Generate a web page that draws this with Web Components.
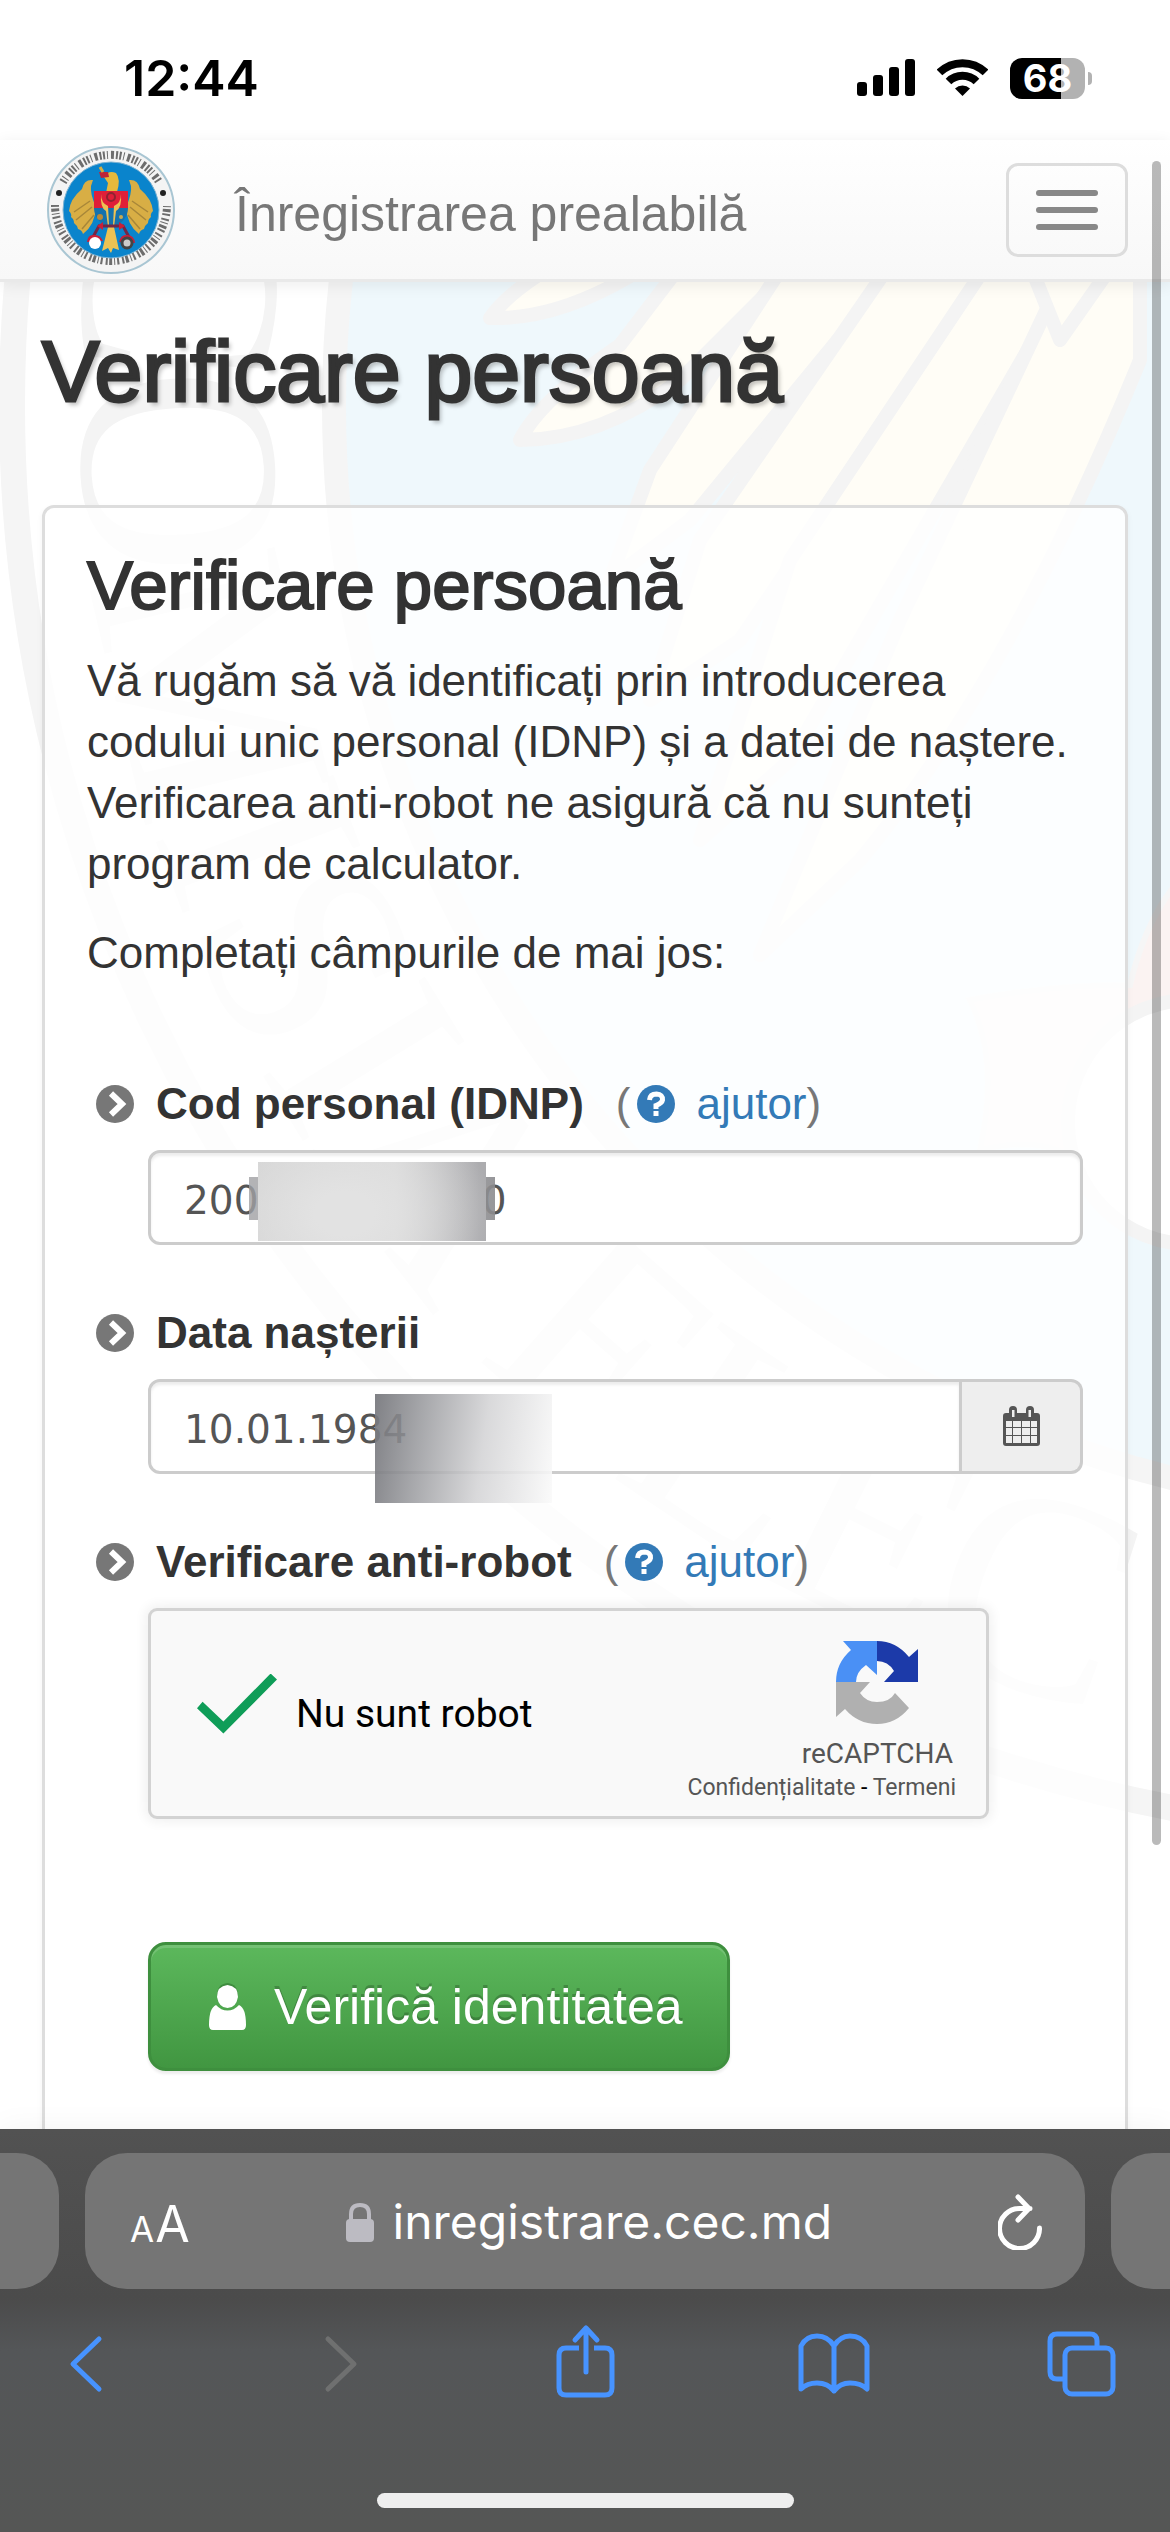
<!DOCTYPE html>
<html lang="ro">
<head>
<meta charset="utf-8">
<meta name="viewport" content="width=device-width, initial-scale=1">
<title>Înregistrarea prealabilă</title>
<style>
  html, body { margin: 0; height: 100%; }
  body { background: #fff; color: #333; font-family: "Liberation Sans", Arial, sans-serif; font-size: 44px; line-height: 61px; }
</style>
</head>
<body>
<phone-shell>
  <status-bar slot="top" time="12:44" battery="68"></status-bar>
  <site-navbar slot="top">Înregistrarea prealabilă</site-navbar>
  <page-title>Verificare persoană</page-title>
  <form-panel heading="Verificare persoană">
    <p slot="intro">Vă rugăm să vă identificați prin introducerea codului unic personal (IDNP) și a datei de naștere. Verificarea anti-robot ne asigură că nu sunteți program de calculator.</p>
    <p slot="intro">Completați câmpurile de mai jos:</p>
    <text-field label="Cod personal (IDNP)" help="ajutor" value="200&#x2007;&#x2007;&#x2007;&#x2007;&#x2007;&#x2007;&#x2007;&#x2007;&#x2007;0" mask="code"></text-field>
    <text-field label="Data nașterii" value="10.01.1984" mask="date" calendar></text-field>
    <captcha-field label="Verificare anti-robot" help="ajutor"></captcha-field>
    <submit-button>Verifică identitatea</submit-button>
  </form-panel>
  <browser-bar slot="bottom" host="inregistrare.cec.md"></browser-bar>
</phone-shell>

<script>
const define = (name, render) => customElements.define(name, class extends HTMLElement {
  connectedCallback() {
    if (this.shadowRoot) return;
    this.attachShadow({ mode: 'open' }).innerHTML = render(this);
  }
});

define('phone-shell', () => `
  <style>
    :host { display: flex; flex-direction: column; height: 100vh; position: relative; overflow: hidden; }
    header, footer { flex: none; position: relative; z-index: 1; }
    main { flex: 1; min-height: 0; overflow: hidden; position: relative; padding: 42px 42px 0; }
    .content { position: relative; }
    .thumb { position: absolute; z-index: 2; right: 9px; top: 161px; height: 66.5%; width: 9px; border-radius: 5px; background: rgba(0,0,0,.27); }
  </style>
  <header><slot name="top"></slot></header>
  <main>
    <seal-watermark></seal-watermark>
    <div class="content"><slot></slot></div>
  </main>
  <footer><slot name="bottom"></slot></footer>
  <div class="thumb"></div>`);

define('seal-watermark', () => `
  <style>
    :host { position: absolute; inset: 0; overflow: hidden; }
    svg { display: block; }
    text { font-family: "Liberation Serif", serif; font-weight: 400; font-size: 290px; fill: #f4f4f4; }
  </style>
  <svg width="1170" height="1850" viewBox="0 282 1170 1850" aria-hidden="true">
    <circle cx="1440" cy="405" r="1428" fill="none" stroke="#f5f5f5" stroke-width="26"/>
    <circle cx="1440" cy="405" r="1106" fill="#eff8fc" stroke="#f5f5f5" stroke-width="24"/>
    <path id="ring" d="M98 180A1361 1361 0 0 0 1440 1756" fill="none"/>
    <text><textPath href="#ring">COMISIA ELEC</textPath></text>
    <g fill="#fffdf6" stroke="#f4f4f4" stroke-width="14" stroke-linejoin="round">
      <path d="M640 240L560 262Q510 290 490 318Q560 320 640 270Z"/>
      <path d="M700 240L620 345Q540 400 520 440Q600 440 680 380L820 240Z"/>
      <path d="M800 240L650 470L610 580L690 520L920 240Z"/>
      <path d="M900 250L700 540L650 700L740 640L1010 240Z"/>
      <path d="M990 260L790 560L700 840L790 760L1080 260Z"/>
      <path d="M1070 260L900 620L760 955L860 860Q1010 680 1140 360V260Z"/>
      <path d="M1020 240L1060 340L1130 240Z"/>
    </g>
    <path d="M1200 860Q1150 900 1130 985Q1050 985 970 1000Q1000 1060 980 1150Q1060 1130 1100 1180L1200 1100Z" fill="#fbf3f2" stroke="#f6f6f6" stroke-width="6"/>
    <circle cx="1190" cy="1122" r="122" fill="#fff" stroke="#f4f4f4" stroke-width="14"/>
  </svg>`);

define('status-bar', el => `
  <style>
    :host { display: flex; justify-content: space-between; align-items: flex-end; box-sizing: border-box; height: 140px; padding: 0 78px 36px 124px; background: #fff; color: #000; font-family: Inter, sans-serif; font-weight: 600; }
    time { font-size: 50px; line-height: 52px; }
    .icons { display: flex; align-items: center; gap: 22px; height: 52px; }
    svg { display: block; }
    .battery { display: flex; align-items: center; gap: 3px; }
    .cell { width: 75px; height: 41px; border-radius: 12px; background: linear-gradient(90deg, #000 68%, #b2b2b2 68%); color: #fff; font-size: 38px; font-weight: 700; line-height: 41px; text-align: center; }
    .nub { width: 4px; height: 13px; border-radius: 0 6px 6px 0; background: #b2b2b2; }
  </style>
  <time>${el.getAttribute('time')}</time>
  <div class="icons">
    <svg width="58" height="38" viewBox="0 0 58 38"><rect y="23" width="10" height="14" rx="3"/><rect x="16" y="16" width="10" height="21" rx="3"/><rect x="32" y="8" width="10" height="29" rx="3"/><rect x="48" width="10" height="37" rx="3"/></svg>
    <svg width="51" height="38" viewBox="0 0 51 38"><g fill="none" stroke="#000" stroke-width="8"><path d="M2.500 13.500A33 33 0 0 1 48.500 13.500"/><path d="M11.500 22.500A20 20 0 0 1 39.500 22.500"/></g><path d="M25.500 37L18 29.500A11 11 0 0 1 33 29.500Z"/></svg>
    <div class="battery"><span class="cell">${el.getAttribute('battery')}</span><span class="nub"></span></div>
  </div>`);

define('cec-seal', () => `
  <style>
    :host { display: block; }
    svg { display: block; }
  </style>
  <svg width="130" height="130" viewBox="0 0 130 130" aria-hidden="true">
    <circle cx="65" cy="65" r="63" fill="#f4f4f4" stroke="#a9c6d3" stroke-width="2"/>
    <g fill="none" stroke="#6d6d6d" stroke-width="8">
      <path d="M17 37A56 56 0 0 1 113 37" stroke-dasharray="2 2 1 3 3 2 2 1.500"/>
      <path d="M9 60A56 56 0 0 0 121 60" stroke-dasharray="2 1.500 3 2 1 2 2 3"/>
    </g>
    <circle cx="65" cy="65" r="48" fill="#0a84cc" stroke="#7fb4d3" stroke-width="1"/>
    <circle cx="13" cy="48" r="3" fill="#222"/><circle cx="117" cy="48" r="3" fill="#222"/>
    <path d="M47 35Q38 34 36 44Q24 54 23 66Q26 69 25 72Q28 74 28 78Q31 80 32 84Q36 85 37 89Q49 80 50 62Q44 49 45 41ZM83 35Q92 34 94 44Q106 54 107 66Q104 69 105 72Q102 74 102 78Q99 80 98 84Q94 85 93 89Q81 80 80 62Q86 49 85 41Z" fill="#d8ae45"/>
    <path d="M28 67L44 56M30 75L46 62M36 84L48 70M102 67L86 56M100 75L84 62M94 84L82 70" stroke="#a88739" stroke-width="1.500"/>
    <path d="M60 48L62 38L58 32Q62 25 70 28Q75 34 71 47Z" fill="#e6b93c"/>
    <path d="M53 27L62 27L63 32L55 33Z" fill="#bf2438"/>
    <path d="M54 22L57 27" stroke="#d5ad42" stroke-width="3"/>
    <path d="M48 46H82V63H48Z" fill="#e01f38"/>
    <path d="M48 63H82Q82 76 65 84Q48 76 48 63Z" fill="#1572ad"/>
    <path d="M55 49Q55 58 62 61L63 80H67L68 61Q75 58 75 49Q76 63 70 66L68 82L73 105L67 103L65 108L62 103L56 106L62 82L60 66Q54 63 55 49Z" fill="#edc253"/>
    <circle cx="65" cy="52" r="4" fill="none" stroke="#8f2431" stroke-width="2"/>
    <circle cx="54" cy="72" r="3" fill="#b88a3a"/><circle cx="75" cy="72" r="2" fill="#c8aa50"/>
    <path d="M52 81H78M53 81L47 92M77 81L83 92" stroke="#732746" stroke-width="3" fill="none"/>
    <path d="M51 81L57 77V85ZM79 81L73 77V85Z" fill="#c91f39"/>
    <path d="M41 97Q42 89 48 90Q54 89 57 96ZM73 97Q75 89 81 90Q88 90 89 98Z" fill="#c91f39"/>
    <circle cx="49" cy="98" r="6" fill="#fff"/><circle cx="81" cy="98" r="5" fill="#ccc" stroke="#444" stroke-width="3"/>
  </svg>`);

define('site-navbar', () => `
  <style>
    :host { display: flex; align-items: center; box-sizing: border-box; height: 142px; padding: 0 42px 0 46px; border-bottom: 3px solid #e9e9e9; background: linear-gradient(#fff, #f8f8f8); box-shadow: 0 3px 15px rgba(0,0,0,.075); color: #777; font-size: 50px; line-height: 60px; }
    a { display: block; margin-right: 59px; }
    span { flex: 1; padding-top: 8px; white-space: nowrap; }
    button { display: flex; flex-direction: column; align-items: center; justify-content: center; gap: 11px; box-sizing: border-box; width: 122px; height: 94px; padding: 0; border: 3px solid #ddd; border-radius: 12px; background: transparent; }
    i { display: block; width: 62px; height: 6px; border-radius: 3px; background: #888; }
  </style>
  <a href="#" aria-label="CEC"><cec-seal></cec-seal></a>
  <span><slot></slot></span>
  <button type="button" aria-label="Meniu"><i></i><i></i><i></i></button>`);

define('page-title', () => `
  <style>
    :host { display: block; margin-bottom: 87px; }
    h1 { margin: 0; font-size: 86px; line-height: 94px; font-weight: 400; -webkit-text-stroke: 3px #333; text-shadow: 3px 4px 4px rgba(0,0,0,.25); }
  </style>
  <h1><slot></slot></h1>`);

define('form-panel', el => `
  <style>
    :host { display: block; padding: 40px 42px 120px; border: 3px solid #ddd; border-radius: 12px; background: rgba(255,255,255,.8); box-shadow: 0 3px 6px rgba(0,0,0,.05); }
    h2 { margin: 0 0 27px; font-size: 69px; line-height: 75px; font-weight: 400; -webkit-text-stroke: 2px #333; }
    ::slotted(p) { margin: 0 0 28px; }
    form { display: flex; flex-direction: column; gap: 57px; padding-top: 62px; }
  </style>
  <h2>${el.getAttribute('heading')}</h2>
  <slot name="intro"></slot>
  <form><slot></slot></form>`);

const labelStyle = `
  .label { display: flex; align-items: center; margin: 0 0 16px 9px; line-height: 61px; }
  .label svg { display: block; flex: none; }
  label.name { margin-left: 22px; font-weight: 700; white-space: nowrap; }
  .help { display: flex; align-items: center; margin-left: 32px; color: #777; }
  .help a { display: flex; align-items: center; gap: 21px; margin-left: 7px; color: #337ab7; text-decoration: none; }`;

const labelRow = (text, help) => `
  <div class="label">
    <svg width="38" height="38" viewBox="0 0 38 38" aria-hidden="true"><circle cx="19" cy="19" r="19" fill="#777"/><path d="M15 8.500L26 19L15 29.500" fill="none" stroke="#fff" stroke-width="6" stroke-linecap="butt"/></svg>
    <label class="name" for="control">${text}</label>
    ${help ? `<span class="help">(<a href="#"><svg width="38" height="38" viewBox="0 0 38 38" aria-hidden="true"><circle cx="19" cy="19" r="19" fill="#337ab7"/><path d="M12.500 15Q13 9 19.500 9Q26 9.500 25.500 15Q25 18 19 20.500V24" fill="none" stroke="#fff" stroke-width="5"/><rect x="16.500" y="26" width="5" height="5" fill="#fff"/></svg>${help}</a>)</span>` : ''}
  </div>`;

define('text-field', el => `
  <style>
    :host { display: block; }
    ${labelStyle}
    .group { display: flex; position: relative; margin-left: 61px; height: 95px; }
    input { flex: 1; min-width: 0; box-sizing: border-box; padding: 5px 33px 0; border: 3px solid #ccc; border-radius: 12px; background: #fff; box-shadow: inset 0 3px 3px rgba(0,0,0,.075); color: #555; font: 39px "DejaVu Sans", Verdana, sans-serif; outline: 0; }
    .group.addon input { border-radius: 12px 0 0 12px; }
    button { display: grid; place-items: center; box-sizing: border-box; width: 121px; padding: 0; border: 3px solid #ccc; border-left: 0; border-radius: 0 12px 12px 0; background: #eee; }
    .mask { position: absolute; }
    .mask.code.small { left: 101px; top: 27px; width: 246px; height: 43px; background: linear-gradient(90deg, rgba(160,160,163,.8), rgba(170,170,172,.9) 50%, rgba(140,140,143,.9)); }
    .mask.code.large { left: 110px; top: 12px; width: 228px; height: 79px; background: radial-gradient(150px 110px at 38% 65%, #e2e2e2 20%, rgba(226,226,226,0)), linear-gradient(90deg, #d2d2d2, #d8d8d8 60%, #acacaf 97%); }
    .mask.date { left: 227px; top: 15px; width: 177px; height: 109px; background: linear-gradient(98deg, rgba(118,119,124,.93), rgba(150,151,155,.85) 25%, rgba(210,210,212,.85) 60%, rgba(250,250,250,.9)); }
  </style>
  ${labelRow(el.getAttribute('label'), el.getAttribute('help'))}
  <div class="group ${el.hasAttribute('calendar') ? 'addon' : ''}">
    <input id="control" type="text" value="${el.getAttribute('value')}">
    ${el.hasAttribute('calendar') ? `<button type="button" aria-label="Calendar"><svg width="37" height="41" viewBox="0 0 37 41"><path fill="#555" fill-rule="evenodd" d="M3 7H6V4Q6 0 10 0Q14 0 14 4V7H23V4Q23 0 27 0Q31 0 31 4V7H34Q37 7 37 10V37Q37 40 34 40H3Q0 40 0 37V10Q0 7 3 7ZM3 15V21H9V15ZM10 15V21H18V15ZM19 15V21H27V15ZM28 15V21H34V15ZM3 22V29H9V22ZM10 22V29H18V22ZM19 22V29H27V22ZM28 22V29H34V22ZM3 30V37H9V30ZM10 30V37H18V30ZM19 30V37H27V30ZM28 30V37H34V30ZM9 4V11H11.500V4ZM25.500 4V11H28V4Z"/></svg></button>` : ''}
    ${el.getAttribute('mask') === 'code' ? '<div class="mask code small"></div><div class="mask code large"></div>' : '<div class="mask date"></div>'}
  </div>`);

define('captcha-field', el => `
  <style>
    :host { display: block; }
    ${labelStyle}
    .box { display: flex; justify-content: space-between; align-items: center; box-sizing: border-box; height: 211px; width: 841px; max-width: 100%; margin-left: 61px; padding: 0 30px 0 46px; border: 3px solid #d3d3d3; border-radius: 9px; background: #f9f9f9; box-shadow: 0 0 12px 3px rgba(0,0,0,.06); font-family: Roboto, sans-serif; }
    .check { display: flex; align-items: center; gap: 19px; color: #000; font-size: 39px; line-height: 48px; }
    input { appearance: none; width: 80px; height: 60px; margin: 0 0 20px; background: #0f9d58; clip-path: polygon(0 58%, 7% 47%, 33% 80%, 92% 0, 100% 10%, 33% 100%); }
    .brand { display: flex; flex-direction: column; align-items: flex-end; padding-top: 18px; color: #555; }
    .mark { display: flex; flex-direction: column; align-items: center; margin-right: 3px; font-size: 28px; line-height: 34px; gap: 12px; }
    .terms { font-size: 23px; line-height: 34px; color: #000; white-space: pre; }
    .terms a { color: #555; text-decoration: none; }
    svg { display: block; }
  </style>
  ${labelRow(el.getAttribute('label'), el.getAttribute('help'))}
  <div class="box">
    <div class="check"><input id="control" type="checkbox" checked><label for="control">Nu sunt robot</label></div>
    <div class="brand">
      <div class="mark">
        <svg width="82" height="84" viewBox="0 0 82 84" aria-hidden="true">
          <path d="M41 0Q60 0 73 16L82 8V41H48L58 30Q52 20 41 20Z" fill="#1c3aa9"/>
          <path d="M41 0H7L15 9Q0 22 0 41H20Q20 31 30 24L41 34Z" fill="#4a90f5"/>
          <path d="M0 41H34L24 52Q30 61 41 61Q54 61 59 52L73 67Q60 83 41 83Q22 83 9 68L0 76Z" fill="#b0b0b0"/>
        </svg>
        <span>reCAPTCHA</span>
      </div>
      <div class="terms"><a href="#">Confidențialitate</a> - <a href="#">Termeni</a></div>
    </div>
  </div>`);

define('submit-button', () => `
  <style>
    :host { display: block; margin: 66px 0 0 61px; }
    button { display: flex; align-items: center; box-sizing: border-box; height: 129px; padding: 0 44px 0 58px; gap: 28px; border: 3px solid #3e8f3e; border-radius: 18px; background: linear-gradient(#5cb85c, #419641); box-shadow: inset 0 3px 0 rgba(255,255,255,.15), 0 3px 3px rgba(0,0,0,.075); color: #fff; font: 50px "Liberation Sans", Arial, sans-serif; line-height: 60px; text-shadow: 0 -3px 0 rgba(0,0,0,.2); }
    svg { display: block; }
  </style>
  <button type="submit">
    <svg width="37" height="48" viewBox="0 0 37 48" aria-hidden="true"><path d="M18.500 0Q29 1 29 13Q27 24 18.500 24Q10 24 8 13Q8 1 18.500 0Z" fill="#3f8c3f"/><path d="M18.500 2Q29 3 29 14Q27 25 18.500 25Q10 25 8 14Q8 3 18.500 2ZM7 22Q12 27.500 18.500 27.500Q25 27.500 30 22Q37 25 37 42Q37 47 33 47H4Q0 47 0 42Q0 25 7 22Z" fill="#fff"/></svg>
    <slot></slot>
  </button>`);

define('browser-bar', el => `
  <style>
    :host { display: flex; flex-direction: column; box-sizing: border-box; height: 403px; padding: 24px 0; background: linear-gradient(#525252, #4b4b4b 42%, #545658 55%, #555655); font-family: Inter, sans-serif; color: #fff; box-shadow: 0 0 30px rgba(0,0,0,.05); }
    .tabs { display: grid; grid-template-columns: 59px 1fr 59px; gap: 26px; height: 136px; }
    .tabs > * { background: #757575; }
    .prev { border-radius: 0 42px 42px 0; }
    .next { border-radius: 42px 0 0 42px; }
    .address { display: flex; align-items: center; justify-content: space-between; padding: 2px 43px 0 45px; border-radius: 42px; }
    button { display: grid; place-items: center; padding: 0; border: 0; background: none; color: inherit; font: inherit; }
    .aa { display: flex; align-items: baseline; gap: 1px; padding-top: 8px; font-size: 50px; line-height: 60px; }
    .aa small { font-size: 35px; }
    .host { display: flex; align-items: center; gap: 19px; padding-right: 10px; font-size: 48px; line-height: 60px; }
    svg { display: block; fill: none; stroke: currentColor; stroke-linecap: round; stroke-linejoin: round; }
    nav { display: flex; justify-content: space-between; padding: 35px 50px 0; color: #4793ff; }
    nav svg { stroke-width: 5; }
    nav .off { color: #6f7070; }
    .home { width: 417px; height: 15px; margin: auto auto 0; border-radius: 8px; background: #eee; }
  </style>
  <div class="tabs">
    <div class="prev"></div>
    <div class="address">
      <button type="button" class="aa" aria-label="Opțiuni pagină"><small>A</small><span>A</span></button>
      <div class="host">
        <svg width="28" height="39" viewBox="0 0 28 39" style="color:#bcbbc2"><rect y="16" width="28" height="23" rx="4" fill="currentColor" stroke="none"/><path d="M5 17V11Q5 2 14 2Q23 2 23 11V17" stroke-width="4"/></svg>
        <span>${el.getAttribute('host')}</span>
      </div>
      <button type="button" aria-label="Reîncarcă"><svg width="44" height="56" viewBox="0 0 44 56" stroke-width="5"><path d="M32 14.500H22A20 20 0 1 0 41.500 34M20 3L31 14.500L20 26" /></svg></button>
    </div>
    <div class="next"></div>
  </div>
  <nav>
    <button type="button" aria-label="Înapoi"><svg width="74" height="80" viewBox="0 0 74 80"><path d="M49 15L23 40L49 65"/></svg></button>
    <button type="button" class="off" aria-label="Înainte"><svg width="74" height="80" viewBox="0 0 74 80"><path d="M29 15L55 40L29 65"/></svg></button>
    <button type="button" aria-label="Partajează"><svg width="74" height="80" viewBox="0 0 74 80"><path stroke-linecap="butt" d="M31 24H18Q11 24 11 31V64Q11 71 18 71H57Q64 71 64 64V31Q64 24 57 24H46"/><path d="M38 48V5M27 16L38 4L49 16"/></svg></button>
    <button type="button" aria-label="Marcaje"><svg width="74" height="80" viewBox="0 0 74 80"><path d="M37 67V22Q31 12 20 12Q9 12 4 22V65Q10 59 20 59Q31 59 37 67Q43 59 53 59Q64 59 70 65V22Q65 12 53 12Q43 12 37 22"/></svg></button>
    <button type="button" aria-label="File"><svg width="74" height="80" viewBox="0 0 74 80"><rect x="19" y="24" width="48" height="46" rx="7"/><path stroke-linecap="butt" d="M51 23V17Q51 10 44 10H11Q4 10 4 17V48Q4 55 11 55H18"/></svg></button>
  </nav>
  <div class="home"></div>`);
</script>
</body>
</html>
